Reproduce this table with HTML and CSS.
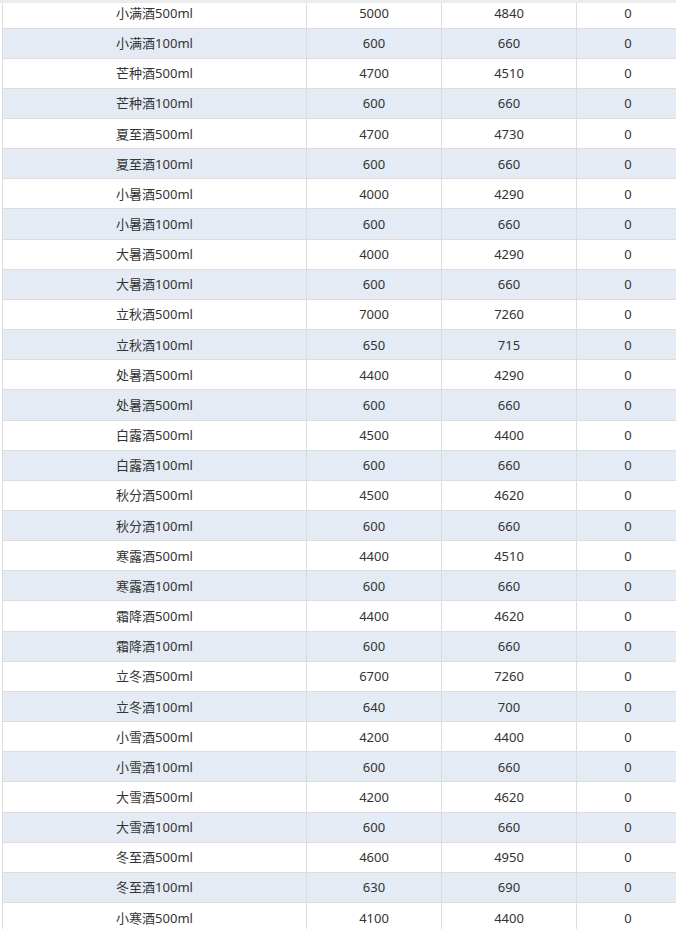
FILE: index.html
```html
<!DOCTYPE html>
<html lang="zh-CN">
<head>
<meta charset="utf-8">
<title>酒品价格表</title>
<link rel="stylesheet" href="styles.css">
</head>
<body>
<div class="topbar"></div>
<div class="viewport">
<table class="grid">
<colgroup><col class="c1"><col class="c2"><col class="c3"><col class="c4"></colgroup>
<tbody>
<tr><td>小满酒500ml</td><td>5000</td><td>4840</td><td>0</td></tr>
<tr><td>小满酒100ml</td><td>600</td><td>660</td><td>0</td></tr>
<tr><td>芒种酒500ml</td><td>4700</td><td>4510</td><td>0</td></tr>
<tr><td>芒种酒100ml</td><td>600</td><td>660</td><td>0</td></tr>
<tr><td>夏至酒500ml</td><td>4700</td><td>4730</td><td>0</td></tr>
<tr><td>夏至酒100ml</td><td>600</td><td>660</td><td>0</td></tr>
<tr><td>小暑酒500ml</td><td>4000</td><td>4290</td><td>0</td></tr>
<tr><td>小暑酒100ml</td><td>600</td><td>660</td><td>0</td></tr>
<tr><td>大暑酒500ml</td><td>4000</td><td>4290</td><td>0</td></tr>
<tr><td>大暑酒100ml</td><td>600</td><td>660</td><td>0</td></tr>
<tr><td>立秋酒500ml</td><td>7000</td><td>7260</td><td>0</td></tr>
<tr><td>立秋酒100ml</td><td>650</td><td>715</td><td>0</td></tr>
<tr><td>处暑酒500ml</td><td>4400</td><td>4290</td><td>0</td></tr>
<tr><td>处暑酒500ml</td><td>600</td><td>660</td><td>0</td></tr>
<tr><td>白露酒500ml</td><td>4500</td><td>4400</td><td>0</td></tr>
<tr><td>白露酒100ml</td><td>600</td><td>660</td><td>0</td></tr>
<tr><td>秋分酒500ml</td><td>4500</td><td>4620</td><td>0</td></tr>
<tr><td>秋分酒100ml</td><td>600</td><td>660</td><td>0</td></tr>
<tr><td>寒露酒500ml</td><td>4400</td><td>4510</td><td>0</td></tr>
<tr><td>寒露酒100ml</td><td>600</td><td>660</td><td>0</td></tr>
<tr><td>霜降酒500ml</td><td>4400</td><td>4620</td><td>0</td></tr>
<tr><td>霜降酒100ml</td><td>600</td><td>660</td><td>0</td></tr>
<tr><td>立冬酒500ml</td><td>6700</td><td>7260</td><td>0</td></tr>
<tr><td>立冬酒100ml</td><td>640</td><td>700</td><td>0</td></tr>
<tr><td>小雪酒500ml</td><td>4200</td><td>4400</td><td>0</td></tr>
<tr><td>小雪酒100ml</td><td>600</td><td>660</td><td>0</td></tr>
<tr><td>大雪酒500ml</td><td>4200</td><td>4620</td><td>0</td></tr>
<tr><td>大雪酒100ml</td><td>600</td><td>660</td><td>0</td></tr>
<tr><td>冬至酒500ml</td><td>4600</td><td>4950</td><td>0</td></tr>
<tr><td>冬至酒100ml</td><td>630</td><td>690</td><td>0</td></tr>
<tr><td>小寒酒500ml</td><td>4100</td><td>4400</td><td>0</td></tr>
</tbody>
</table>
</div>
</body>
</html>
```

FILE: styles.css
```css
html, body {
  margin: 0;
  padding: 0;
  background: #ffffff;
  overflow: hidden;
}

body {
  width: 676px;
  height: 929px;
  font-family: "Noto Sans", "Noto Sans CJK SC", sans-serif;
  font-size: 13px;
  color: #333333;
}

.topbar {
  height: 3px;
  background: #ececec;
}

.viewport {
  height: 926px;
  overflow: hidden;
  padding-left: 2px;
}

.grid {
  border-collapse: collapse;
  table-layout: fixed;
  width: 677px;
  margin-top: -5.67px;
}

.c1 { width: 304px; }
.c2 { width: 135px; }
.c3 { width: 135px; }
.c4 { width: 103px; }

.grid td {
  height: 29.167px;
  padding: 0;
  border: 1px solid #dcdcdc;
  text-align: center;
  vertical-align: middle;
  line-height: 16px;
  white-space: nowrap;
}

.grid tr:nth-child(even) td {
  background: #e5ebf5;
}
```
